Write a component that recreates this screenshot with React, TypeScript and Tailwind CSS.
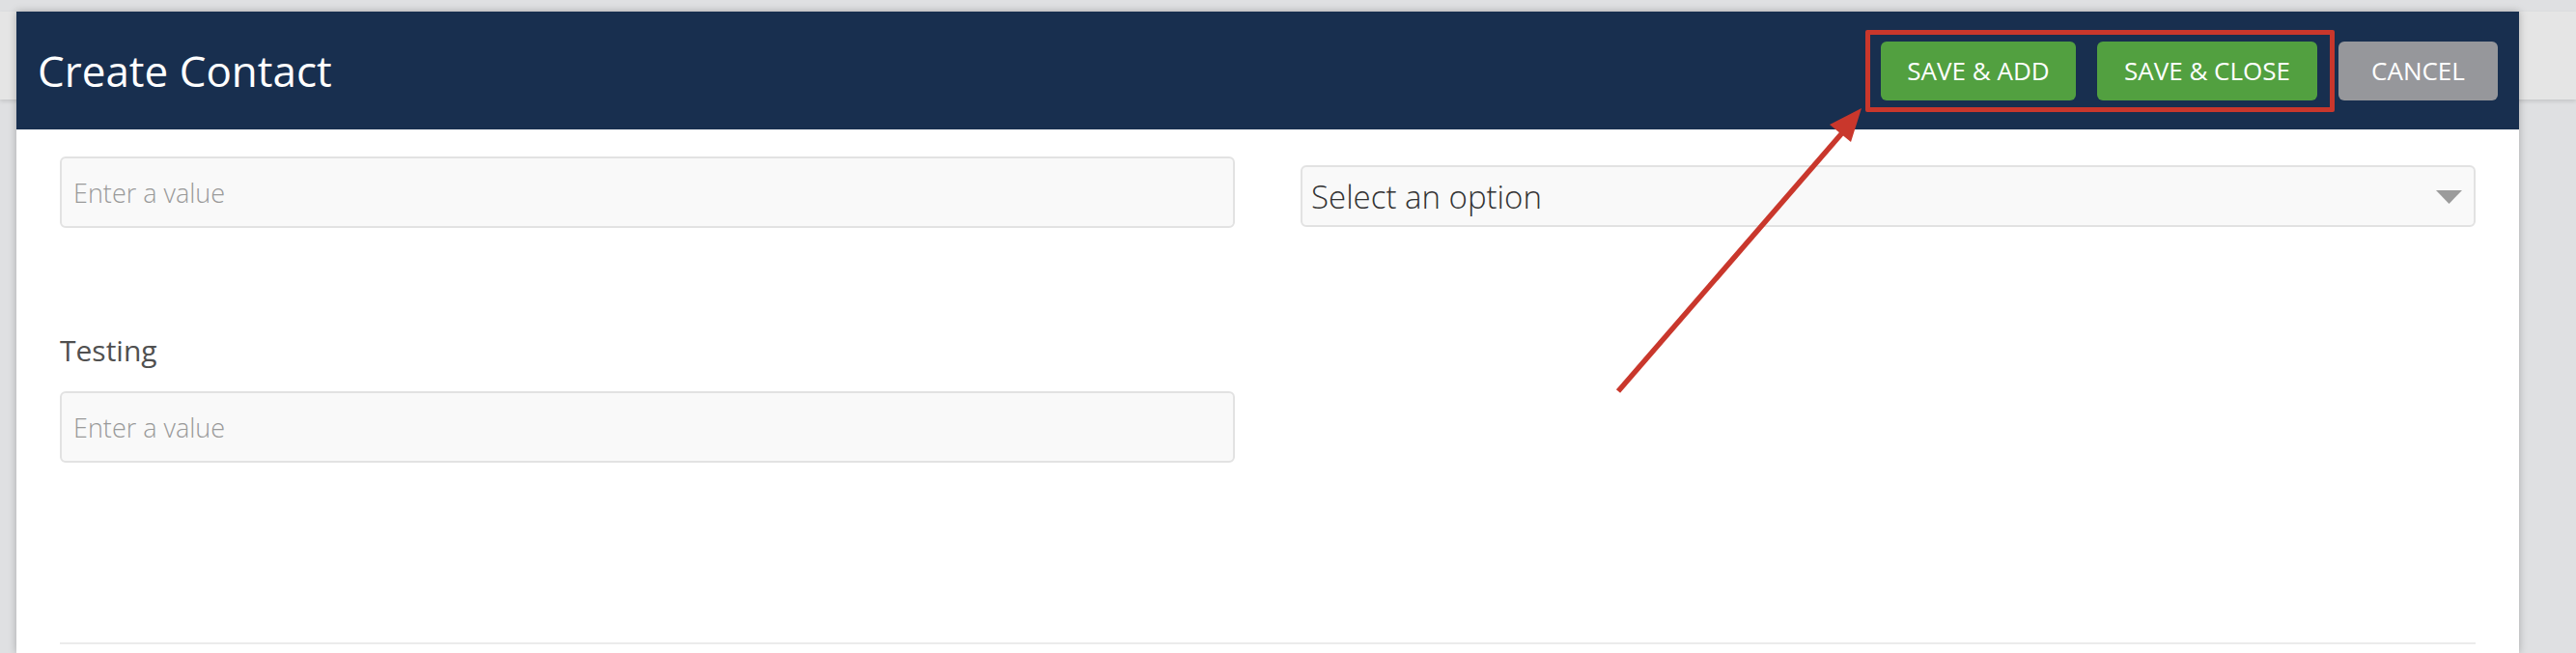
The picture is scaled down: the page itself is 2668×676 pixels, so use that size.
import React from 'react';

const font = { fontFamily: '"Open Sans", "Liberation Sans", sans-serif' };

const ArrowAnnotation: React.FC = () => (
  <svg className="absolute left-0 top-0 pointer-events-none" width="2668" height="676" viewBox="0 0 2668 676">
    <line x1="1676" y1="405" x2="1912" y2="133" stroke="#c9372c" strokeWidth="5.5" />
    <polygon points="1928,112 1895,129 1917,147" fill="#c9372c" />
  </svg>
);

const App: React.FC = () => {
  return (
    <div className="relative w-full h-[676px] overflow-hidden bg-[#dfe0e2]" style={font}>
      {/* page bar behind the modal */}
      <div className="mt-[12px] h-[91px] bg-[#e5e5e5] shadow-[0_2px_4px_rgba(0,0,0,0.12)]" />

      <div className="absolute left-[17px] top-[12px] right-[59px] bottom-0 bg-white shadow-[0_0_8px_rgba(0,0,0,0.25)]">
        <div className="h-[122px] bg-[#182f4f] flex items-center justify-between pl-[22px] pr-[22px]">
          <h2 className="text-white text-[44px] leading-none font-normal">Create Contact</h2>
          <div className="flex items-center gap-[22px]">
            <button className="w-[202px] h-[61px] rounded-[6px] bg-[#52a040] text-white text-[26px] uppercase">
              Save &amp; Add
            </button>
            <button className="w-[228px] h-[61px] rounded-[6px] bg-[#52a040] text-white text-[26px] uppercase">
              Save &amp; Close
            </button>
            <button className="w-[165px] h-[61px] rounded-[6px] bg-[#96979b] text-white text-[26px] uppercase">
              Cancel
            </button>
          </div>
        </div>

        <div className="px-[45px] pt-[28px]">
          <div className="grid grid-cols-2 gap-x-[68px]">
            <div>
              <div className="h-[74px] rounded-[6px] border-2 border-[#e2e2e2] bg-[#f9f9f9] flex items-center px-[12px] pt-[2px]">
                <span className="text-[27px] font-light text-[#9a9a9a]">Enter a value</span>
              </div>
              <div className="mt-[106px] text-[30px] text-[#505050] leading-[42px]">Testing</div>
              <div className="mt-[21px] h-[74px] rounded-[6px] border-2 border-[#e2e2e2] bg-[#f9f9f9] flex items-center px-[12px] pt-[2px]">
                <span className="text-[27px] font-light text-[#9a9a9a]">Enter a value</span>
              </div>
            </div>
            <div className="pt-[9px]">
              <div className="h-[64px] rounded-[6px] border-2 border-[#e2e2e2] bg-[#f9f9f9] flex items-center justify-between pl-[9px] pr-[12px] pt-[2px]">
                <span className="text-[33px] font-light text-[#333]">Select an option</span>
                <svg width="27" height="14" viewBox="0 0 27 14">
                  <polygon points="0,0 27,0 13.5,14" fill="#9b9b9b" />
                </svg>
              </div>
            </div>
          </div>
          <div className="mt-[186px] h-[2px] bg-[#ebebeb]" />
        </div>
      </div>

      {/* annotation */}
      <div className="absolute left-[1932px] top-[31px] w-[486px] h-[85px] border-[5px] border-[#c9372c] rounded-[2px]" />
      <ArrowAnnotation />
    </div>
  );
};

export default App;
